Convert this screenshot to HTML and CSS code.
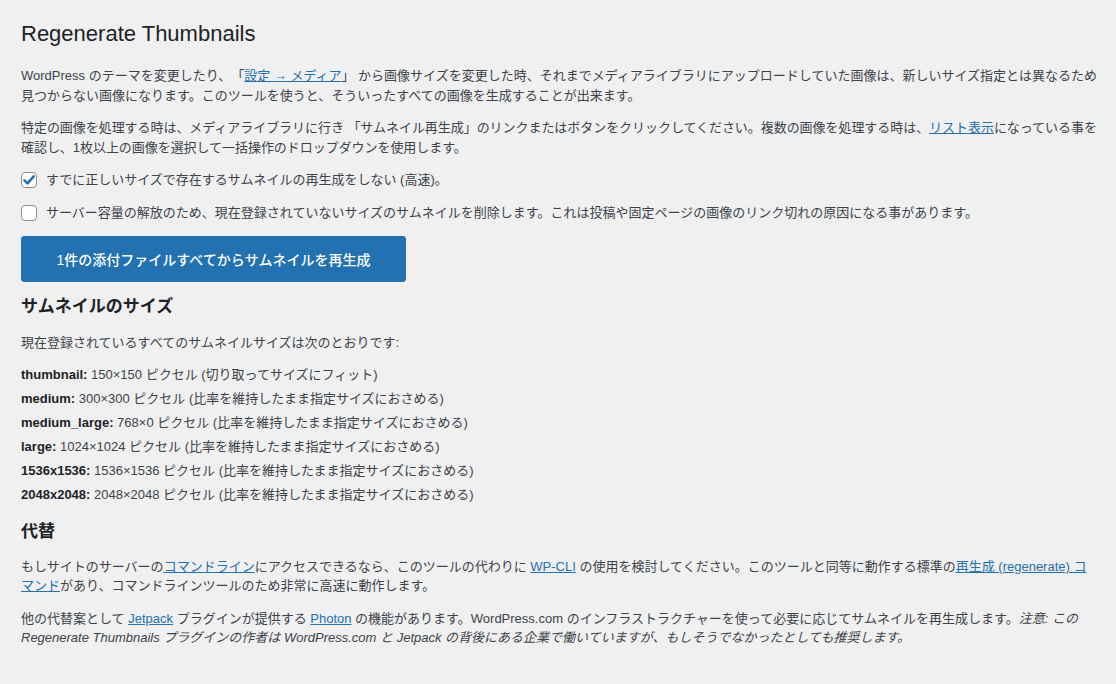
FILE: index.html
```html
<!DOCTYPE html>
<html lang="ja">
<head>
<meta charset="utf-8">
<title>Regenerate Thumbnails</title>
<link rel="stylesheet" href="styles.css">
</head>
<body>
<div class="wrap">
  <h1 class="title">Regenerate Thumbnails</h1>
  <p>WordPress のテーマを変更したり、「<a href="#">設定 → メディア</a>」 から画像サイズを変更した時、それまでメディアライブラリにアップロードしていた画像は、新しいサイズ指定とは異なるため見つからない画像になります。このツールを使うと、そういったすべての画像を生成することが出来ます。</p>
  <p class="tight">特定の画像を処理する時は、メディアライブラリに行き 「サムネイル再生成」のリンクまたはボタンをクリックしてください。複数の画像を処理する時は、<a href="#">リスト表示</a>になっている事を確認し、1枚以上の画像を選択して一括操作のドロップダウンを使用します。</p>
  <label class="check">
    <span class="box checked"><svg viewBox="0 0 16 16" width="16" height="16"><path d="M3.4 8.4 L6.5 11.4 L12.7 4.3" fill="none" stroke="#2271b1" stroke-width="2.6" stroke-linecap="round" stroke-linejoin="round"/></svg></span>
    <span>すでに正しいサイズで存在するサムネイルの再生成をしない (高速)。</span>
  </label>
  <label class="check">
    <span class="box"></span>
    <span>サーバー容量の解放のため、現在登録されていないサイズのサムネイルを削除します。これは投稿や固定ページの画像のリンク切れの原因になる事があります。</span>
  </label>
  <button class="btn-hero">1件の添付ファイルすべてからサムネイルを再生成</button>

  <h2>サムネイルのサイズ</h2>
  <p>現在登録されているすべてのサムネイルサイズは次のとおりです:</p>
  <ul class="sizes">
    <li><strong>thumbnail:</strong> 150×150 ピクセル (切り取ってサイズにフィット)</li>
    <li><strong>medium:</strong> 300×300 ピクセル (比率を維持したまま指定サイズにおさめる)</li>
    <li><strong>medium_large:</strong> 768×0 ピクセル (比率を維持したまま指定サイズにおさめる)</li>
    <li><strong>large:</strong> 1024×1024 ピクセル (比率を維持したまま指定サイズにおさめる)</li>
    <li><strong>1536x1536:</strong> 1536×1536 ピクセル (比率を維持したまま指定サイズにおさめる)</li>
    <li><strong>2048x2048:</strong> 2048×2048 ピクセル (比率を維持したまま指定サイズにおさめる)</li>
  </ul>

  <h2 class="alt">代替</h2>
  <p>もしサイトのサーバーの<a href="#">コマンドライン</a>にアクセスできるなら、このツールの代わりに <a href="#">WP-CLI</a> の使用を検討してください。このツールと同等に動作する標準の<a href="#">再生成 (regenerate) コマンド</a>があり、コマンドラインツールのため非常に高速に動作します。</p>
  <p>他の代替案として <a href="#">Jetpack</a> プラグインが提供する <a href="#">Photon</a> の機能があります。WordPress.com のインフラストラクチャーを使って必要に応じてサムネイルを再生成します。<em>注意: この Regenerate Thumbnails プラグインの作者は WordPress.com と Jetpack の背後にある企業で働いていますが、もしそうでなかったとしても推奨します。</em></p>
</div>
</body>
</html>
```

FILE: styles.css
```css
html, body {
  margin: 0;
  padding: 0;
  background: #f0f0f1;
}
body {
  font-family: "Liberation Sans", "Noto Sans CJK JP", sans-serif;
  font-size: 13px;
  line-height: 1.4em;
  color: #3c434a;
  text-spacing-trim: space-all;
}
.wrap {
  padding: 20px 18px 0 21px;
}
.title {
  font-size: 22px;
  font-weight: 400;
  line-height: 28px;
  color: #1d2327;
  margin: 0 0 18px 0;
}
p {
  margin: 13px 0;
  line-height: 1.5;
}
.title + p { margin-top: 0; }
.tight {
  letter-spacing: -0.05px;
  margin-top: 12px;
}
a {
  color: #2271b1;
  text-decoration: underline;
}
.check {
  display: flex;
  align-items: center;
  gap: 9px;
  margin: 0 0 14px 0;
  line-height: 19px;
}
.box {
  width: 16px;
  height: 16px;
  border: 1px solid #8c8f94;
  border-radius: 4px;
  background: #fff;
  flex: none;
  display: flex;
  align-items: center;
  justify-content: center;
  box-sizing: border-box;
}
.box svg { display: block; flex: none; }
.btn-hero {
  display: block;
  margin-top: 11px;
  width: 385px;
  height: 46px;
  background: #2271b1;
  border: 1px solid #2271b1;
  border-radius: 3px;
  color: #fff;
  font-family: "Liberation Sans", "Noto Sans CJK JP", sans-serif;
  font-size: 14px;
  font-weight: 500;
  padding: 0 20px;
  cursor: pointer;
}
h2 {
  font-size: 17px;
  font-weight: 600;
  color: #1d2327;
  margin: 14px 0 15px 0;
  line-height: 22px;
}
h2.alt { margin-bottom: 14px; }
.sizes {
  list-style: none;
  padding: 0;
  margin: 0 0 17px 0;
}
.sizes li {
  margin-bottom: 6px;
  line-height: 18px;
}
.sizes strong {
  font-weight: 700;
  color: #1d2327;
}
em { font-style: italic; }
```
